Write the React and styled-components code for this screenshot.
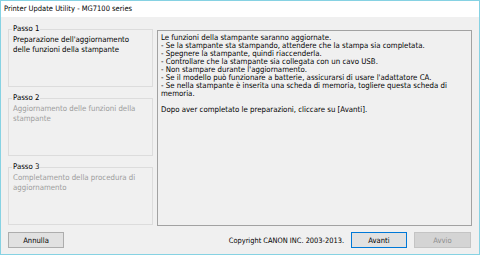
import React from 'react'
import styled, { createGlobalStyle } from 'styled-components'

const GlobalStyle = createGlobalStyle`
    html, body {
        margin: 0;
        padding: 0;
        background: #ffffff;
    }
    body {
        font-family: "DejaVu Sans Condensed", "DejaVu Sans", "Liberation Sans", sans-serif;
        font-stretch: condensed;
        color: #000;
    }
`

const Window = styled.div`
    width: 480px;
    height: 255px;
    box-sizing: border-box;
    border: 1px solid #86d2e3;
    display: flex;
    flex-direction: column;
    background: #f0f0f0;
`

const TitleBar = styled.div`
    flex: none;
    height: 16px;
    line-height: 16px;
    padding-left: 3px;
    background: #ffffff;
    font-size: 7.5px;
    white-space: nowrap;
`

const Body = styled.div`
    flex: 1;
    display: flex;
    flex-direction: column;
    padding: 6px 7px 0 7px;
`

const Main = styled.div`
    display: flex;
    align-items: flex-start;
    gap: 4px;
`

const Steps = styled.div`
    width: 145px;
    flex: none;
    display: flex;
    flex-direction: column;
    gap: 5px;
`

const Group = styled.fieldset`
    margin: 0;
    padding: 0 4px;
    min-width: 0;
    height: 64px;
    box-sizing: border-box;
    border: 1px solid #dcdcdc;
`

const Legend = styled.legend`
    padding: 0 1px;
    margin-left: -1px;
    font-size: 7.8px;
    line-height: 12px;
    color: #000;
`

const Desc = styled.p`
    margin: 0;
    font-size: 7.8px;
    line-height: 9.5px;
    color: ${props => props.$active ? '#000' : '#9c9c9c'};
`

const Memo = styled.div`
    margin-top: 7px;
    width: 315px;
    height: 196px;
    flex: none;
    box-sizing: border-box;
    border: 1px solid #a2a2a2;
    padding: 3px 3px;
    font-size: 7.8px;
    line-height: 8px;
`

const Line = styled.div`
    white-space: nowrap;
    min-height: 8px;
`

const Footer = styled.div`
    display: flex;
    align-items: center;
    gap: 7px;
    margin-top: 6px;
    padding-right: 1px;
`

const Copyright = styled.span`
    margin-left: auto;
    font-size: 7.4px;
    white-space: nowrap;
`

const Button = styled.button`
    width: ${props => props.$wide ? '57px' : '56px'};
    height: 16px;
    box-sizing: border-box;
    padding: 0;
    font-family: inherit;
    font-stretch: condensed;
    font-size: 7.6px;
    color: #000;
    background: #e1e1e1;
    border: 1px solid ${props => props.$primary ? '#0078d7' : '#adadad'};

    &:disabled {
        background: #d4d4d4;
        border-color: #c4c4c4;
        color: #8e8e8e;
    }
`

const steps = [
    { label: 'Passo 1', text: ["Preparazione dell'aggiornamento", 'delle funzioni della stampante'], active: true },
    { label: 'Passo 2', text: ['Aggiornamento delle funzioni della', 'stampante'] },
    { label: 'Passo 3', text: ['Completamento della procedura di', 'aggiornamento'] },
]

const memo = [
    'Le funzioni della stampante saranno aggiornate.',
    '- Se la stampante sta stampando, attendere che la stampa sia completata.',
    '- Spegnere la stampante, quindi riaccenderla.',
    '- Controllare che la stampante sia collegata con un cavo USB.',
    "- Non stampare durante l'aggiornamento.",
    "- Se il modello può funzionare a batterie, assicurarsi di usare l'adattatore CA.",
    '- Se nella stampante è inserita una scheda di memoria, togliere questa scheda di',
    'memoria.',
    '',
    'Dopo aver completato le preparazioni, cliccare su [Avanti].',
]

const App = () => {
    return (
        <>
            <GlobalStyle />
            <Window>
                <TitleBar>Printer Update Utility - MG7100 series</TitleBar>
                <Body>
                    <Main>
                        <Steps>
                            {steps.map(step => (
                                <Group key={step.label}>
                                    <Legend>{step.label}</Legend>
                                    {step.text.map(t => (
                                        <Desc key={t} $active={step.active}>{t}</Desc>
                                    ))}
                                </Group>
                            ))}
                        </Steps>
                        <Memo>
                            {memo.map((l, i) => <Line key={i}>{l}</Line>)}
                        </Memo>
                    </Main>
                    <Footer>
                        <Button>Annulla</Button>
                        <Copyright>Copyright CANON INC. 2003-2013.</Copyright>
                        <Button $primary>Avanti</Button>
                        <Button $wide disabled>Avvio</Button>
                    </Footer>
                </Body>
            </Window>
        </>
    )
}

export default App
